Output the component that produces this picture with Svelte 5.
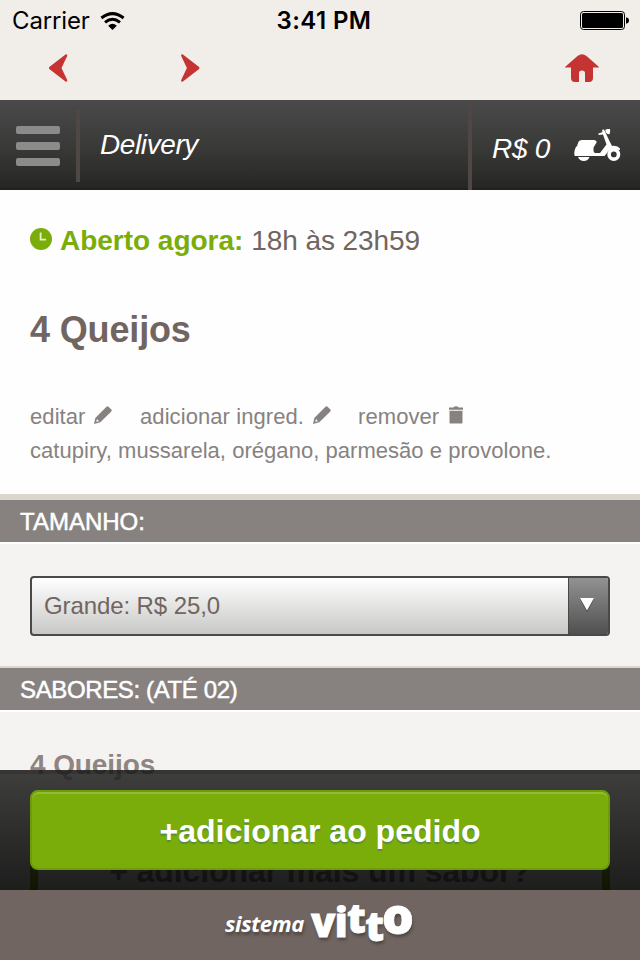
<script>
  let hours = '18h às 23h59';
  let total = 0;
  let size = 'Grande: R$ 25,0';
  let product = {
    name: '4 Queijos',
    ingredients: 'catupiry, mussarela, orégano, parmesão e provolone.'
  };
</script>

<div class="app">
  <div class="status">
    <div class="carrier">
      <span>Carrier</span>
      <svg width="25" height="19" viewBox="0 0 25 19">
        <path d="M1.4 6Q12.5-2.8 23.6 6" fill="none" stroke="#000" stroke-width="3" />
        <path d="M5 10.3Q12.5 4.2 20 10.3" fill="none" stroke="#000" stroke-width="3" />
        <path d="M8.2 13.7Q12.5 9.8 16.8 13.7L12.5 18Z" />
      </svg>
    </div>
    <span class="time">3:41 PM</span>
    <svg class="battery" width="49" height="20" viewBox="0 0 49 20">
      <rect x=".5" y=".5" width="44" height="18" rx="3" fill="none" stroke="#000" />
      <rect x="2" y="2" width="41" height="15" rx="1.5" />
      <path d="M46 6.2q3 .6 3 3.3t-3 3.3z" />
    </svg>
  </div>

  <nav class="browser">
    <svg class="back" width="20" height="28" viewBox="0 0 20 28">
      <path d="M.3 13Q-.3 14 .3 15L16.5 27.6Q18.6 28.3 18.2 26L12.5 14L18.2 2Q18.6-.3 16.5.4Z" />
    </svg>
    <svg class="forward" width="20" height="28" viewBox="0 0 20 28">
      <path d="M18.1 13Q18.7 14 18.1 15L1.9 27.6Q-.2 28.3.2 26L5.9 14L.2 2Q-.2-.3 1.9.4Z" />
    </svg>
    <svg class="home" width="34" height="28" viewBox="0 0 34 28">
      <path d="M0 13L12.5 2Q17-1.5 21.5 2L34 13V13.6H28V24Q28 28 24 28H20V19Q20 16.5 17 16.5T14 19V28H10Q6 28 6 24V13.6H0Z" />
    </svg>
  </nav>

  <header>
    <button class="menu" aria-label="menu"><i></i><i></i><i></i></button>
    <h1>Delivery</h1>
    <div class="cart">
      <span>R$ {total}</span>
      <svg width="47" height="33" viewBox="0 0 47 33" fill="#fff">
        <path d="M3 17L4.5 12.8Q5.5 11 8 11H20Q23.5 11.5 22.3 14L19.5 18.5V21.5Q19.5 24 21.5 24H26L32.5 15.5L29 5.5L25 6L24 4.7L28.5 3L28 1L30 .5L35 11L38 17Q43.5 16.3 46 19.5Q46.5 21 45 21L41 20Q35 19.5 33 24L30.5 27H1Q0 27 .3 24Q.8 18.5 3 17Z" />
        <path d="M31.3.8Q35-.6 36 0Q36.6 5 34.7 5.3Q31.2 4.8 31.3.8Z" />
        <path d="M4 28H15.5Q14 32 9.8 32T4 28Z" />
        <circle cx="39.8" cy="25.4" r="4.7" fill="none" stroke="#fff" stroke-width="3.6" />
      </svg>
    </div>
  </header>

  <section class="product">
    <p class="hours">
      <svg width="22" height="22" viewBox="0 0 22 22">
        <circle cx="11" cy="11" r="11" fill="#7aad0a" />
        <path d="M10.6 4.5V11.7H16" fill="none" stroke="#e4efce" stroke-width="1.8" />
      </svg>
      <strong>Aberto agora:</strong>
      <span>{hours}</span>
    </p>
    <h2>{product.name}</h2>
    <div class="actions">
      <a class="edit" href="#editar">
        <span>editar</span>
        <svg width="18" height="18" viewBox="0 0 18 18"><path fill-rule="evenodd" d="M0 18L1.3 12L12.5.8Q13.5-.2 14.5.8L17.4 3.4Q18.2 4.4 17.3 5.4L6.3 16.2ZM3 13L2.2 15.8L5 15.2Z" /></svg>
      </a>
      <a class="add" href="#adicionar">
        <span>adicionar ingred.</span>
        <svg width="18" height="18" viewBox="0 0 18 18"><path fill-rule="evenodd" d="M0 18L1.3 12L12.5.8Q13.5-.2 14.5.8L17.4 3.4Q18.2 4.4 17.3 5.4L6.3 16.2ZM3 13L2.2 15.8L5 15.2Z" /></svg>
      </a>
      <a class="remove" href="#remover">
        <span>remover</span>
        <svg width="14" height="18" viewBox="0 0 14 18"><path d="M0 1.5H4.5Q5 .2 7 .2T9.5 1.5H14V3.7H0ZM.5 4.7H13.5V16.5Q13.5 17.5 12.5 17.5H1.5Q.5 17.5.5 16.5Z" /></svg>
      </a>
    </div>
    <p class="ingredients">{product.ingredients}</p>
  </section>

  <h3 class="first"><span>TAMANHO:</span></h3>
  <section class="size">
    <button class="select">
      <span class="value">{size}</span>
      <span class="arrow">
        <svg width="14" height="14" viewBox="0 0 14 14"><path d="M0 1H14L7 14Z" fill="#444" /><path d="M0 0H14L7 12.5Z" fill="#fff" /></svg>
      </span>
    </button>
  </section>

  <h3 class="flavours-title"><span>SABORES: (ATÉ 02)</span></h3>
  <section class="flavours">
    <strong>{product.name}</strong>
    <button class="more"><span>+ adicionar mais um sabor?</span></button>
  </section>

  <div class="bottom">
    <div class="order">
      <button><span>+adicionar ao pedido</span></button>
    </div>
    <footer>
      <span class="sistema">sistema</span>
      <span class="vitto">vi<span class="t1">t</span><span class="t2">t</span><span class="o">o</span></span>
    </footer>
  </div>
</div>

<style>
  :global(body) {
    margin: 0;
    background: #f4f3f1;
  }

  .app {
    position: relative;
    width: 640px;
    height: 960px;
    overflow: hidden;
    background: #f4f3f1;
    font-family: 'Liberation Sans', Arial, sans-serif;
    color: #706560;
  }

  .app * {
    box-sizing: border-box;
  }

  h1, h2, h3, p {
    margin: 0;
  }

  svg {
    display: block;
    flex: none;
  }

  span, strong {
    white-space: nowrap;
  }

  button {
    border: 0;
    padding: 0;
    font-family: inherit;
  }

  .status {
    display: grid;
    grid-template-columns: 1fr auto 1fr;
    height: 40px;
    padding: 2px 11px 0 12px;
    align-items: center;
    background: #f1eeea;
    color: #000;
    font: 24px/38px Inter, sans-serif;
  }

  .carrier {
    display: flex;
    align-items: center;
    gap: 10px;
    letter-spacing: -0.15px;
  }

  .time {
    font-weight: 600;
    letter-spacing: 0.4px;
    margin-left: 7px;
  }

  .battery {
    justify-self: end;
  }

  .browser {
    display: flex;
    height: 60px;
    padding: 14px 41px 0 49px;
    background: #f1eeea;
    fill: #c53333;
  }

  .forward {
    margin-left: 112px;
  }

  .home {
    margin-left: auto;
  }

  header {
    display: flex;
    height: 90px;
    background: linear-gradient(#4a4a4a, #3a3a39 50%, #272726 96%, #1f1f1f);
    color: #fff;
    font-style: italic;
  }

  .menu {
    display: flex;
    flex-direction: column;
    gap: 8px;
    width: 80px;
    height: 72px;
    margin-top: 10px;
    padding: 16px 0 0 16px;
    background: none;
    border-right: 4px solid #4e4743;
  }

  .menu i {
    width: 44px;
    height: 8px;
    border-radius: 2px;
    background: #8b8b8b;
  }

  h1 {
    flex: 1;
    padding-left: 20px;
    font-size: 28px;
    font-weight: 400;
    line-height: 90px;
    letter-spacing: -0.4px;
  }

  .cart {
    display: flex;
    width: 172px;
    padding-left: 20px;
    border-left: 4px solid #4e4743;
    font-size: 28px;
    line-height: 97px;
  }

  .cart span {
    width: 82px;
    letter-spacing: -0.3px;
  }

  .cart svg {
    margin-top: 29px;
  }

  .product {
    height: 304px;
    padding: 30px 30px 0;
    background: #fefefe;
  }

  .hours {
    display: flex;
    align-items: center;
    height: 40px;
    padding-top: 1px;
    font-size: 28px;
  }

  .hours svg {
    margin: -4px 8px 0 0;
  }

  .hours strong {
    color: #7aad0a;
    margin-right: 8px;
    letter-spacing: -0.02px;
  }

  .hours span {
    letter-spacing: -0.08px;
  }

  h2 {
    margin-top: 46px;
    font-size: 36px;
    line-height: 48px;
    letter-spacing: -0.15px;
  }

  .actions {
    display: flex;
    height: 34px;
    margin-top: 46px;
    font-size: 22px;
    line-height: 34px;
    letter-spacing: 0.08px;
  }

  .actions a {
    display: flex;
    gap: 8.5px;
    color: #878280;
    text-decoration: none;
  }

  .actions svg {
    margin-top: 6px;
    fill: #878280;
  }

  .edit {
    width: 110px;
  }

  .add {
    width: 218px;
  }

  .actions .remove {
    gap: 10px;
  }

  .ingredients {
    color: #878280;
    font-size: 22px;
    line-height: 34px;
    letter-spacing: 0.04px;
  }

  h3 {
    height: 50px;
    padding-left: 20px;
    border-top: 2px solid #ddd6cd;
    border-bottom: 2px solid #fff;
    background: #878280;
    color: #fff;
    font-size: 24px;
    font-weight: 400;
    line-height: 44px;
    -webkit-text-stroke: 0.5px #fff;
  }

  .first {
    border-top-width: 6px;
  }

  .flavours-title {
    height: 46px;
    letter-spacing: -0.37px;
  }

  .size {
    height: 122px;
    padding: 32px 30px 0;
  }

  .select {
    display: flex;
    width: 580px;
    height: 60px;
    overflow: hidden;
    border: 2px solid #494949;
    border-radius: 4px;
    background: linear-gradient(#fff, #c8c8c6);
    color: #706560;
    font-size: 24px;
    line-height: 56px;
    text-align: left;
  }

  .value {
    flex: 1;
    padding-left: 12px;
    letter-spacing: -0.1px;
  }

  .arrow {
    width: 40px;
    height: 56px;
    padding: 20px 0 0 11px;
    border-left: 1px solid #494949;
    background: linear-gradient(#929292, #505050);
  }

  .flavours {
    padding: 35px 30px 0;
  }

  .flavours strong {
    display: block;
    color: #908481;
    font-size: 28px;
    line-height: 36px;
    letter-spacing: -0.1px;
  }

  .more {
    width: 580px;
    height: 88px;
    margin-top: 44px;
    border: 8px solid #7aad0a;
    background: #f4f3f1;
    color: #807572;
    font-size: 32px;
    font-weight: 700;
    line-height: 72px;
    letter-spacing: -0.1px;
  }

  /* fixed bar, the flavour list shows faintly through it */
  .bottom {
    position: absolute;
    left: 0;
    bottom: 0;
    width: 640px;
    height: 190px;
  }

  .order {
    height: 120px;
    padding: 16px 30px 0;
    border-top: 4px solid rgba(26, 26, 26, 0.88);
    background: linear-gradient(rgba(36, 36, 35, 0.88), rgba(0, 0, 0, 0.88)) padding-box;
  }

  .order button {
    width: 580px;
    height: 80px;
    border: 2px solid #6d9b09;
    border-radius: 8px;
    background: #7aad0a;
    box-shadow: inset 0 2px 0 #93bb39;
    color: #fff;
    font-size: 32px;
    font-weight: 700;
    line-height: 78px;
    text-shadow: 0 2px 1px #568e3c;
  }

  footer {
    display: flex;
    height: 70px;
    padding-left: 225px;
    background: #706560;
    color: #fff;
    text-shadow: 1px 3px 3px #4d4643;
  }

  .sistema {
    width: 86px;
    font: italic 700 22px/66px 'Open Sans', sans-serif;
    letter-spacing: -0.4px;
  }

  .vitto {
    font: 800 40px/62px 'Open Sans', sans-serif;
    letter-spacing: -0.7px;
    -webkit-text-stroke: 0.8px #fff;
  }

  .t1, .t2, .o {
    position: relative;
  }

  .t1 {
    top: -4px;
    font-size: 41px;
  }

  .t2 {
    top: 4px;
    font-size: 41px;
    letter-spacing: -2px;
  }

  .o {
    top: -3px;
    font-size: 50px;
    line-height: 40px;
  }
</style>
